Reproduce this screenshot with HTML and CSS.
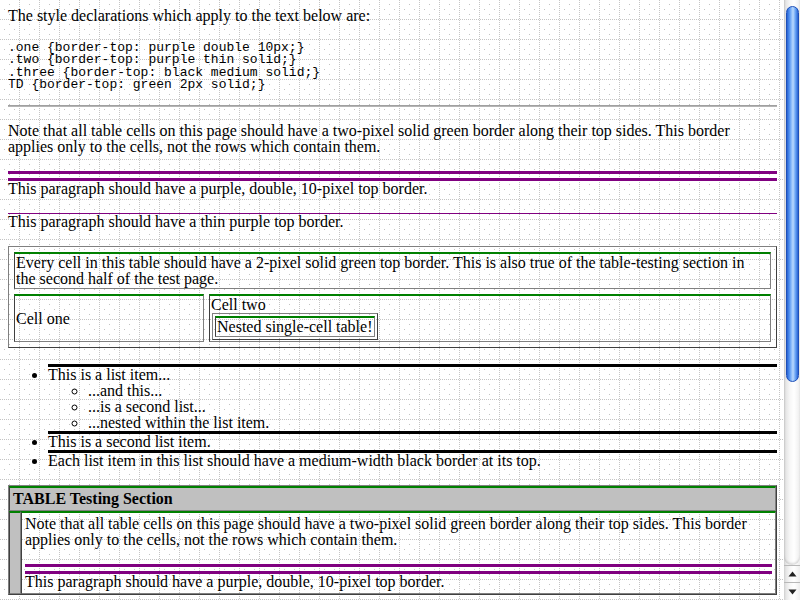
FILE: index.html
```html
<!DOCTYPE html>
<html>
<head>
<meta charset="utf-8">
<title>border-top</title>
<link rel="stylesheet" href="styles.css">
</head>
<body>
<div class="window">
  <main class="page">
    <p class="intro">The style declarations which apply to the text below are:</p>
<pre class="code">.one {border-top: purple double 10px;}
.two {border-top: purple thin solid;}
.three {border-top: black medium solid;}
TD {border-top: green 2px solid;}</pre>
    <hr class="rule">
    <p>Note that all table cells on this page should have a two-pixel solid green border along their top sides. This border applies only to the cells, not the rows which contain them.</p>
    <p class="one">This paragraph should have a purple, double, 10-pixel top border.</p>
    <p class="two">This paragraph should have a thin purple top border.</p>
    <table class="bt">
      <tr>
        <td colspan="2">Every cell in this table should have a 2-pixel solid green top border. This is also true of the table-testing section in<br>the second half of the test page.</td>
      </tr>
      <tr>
        <td class="c1">Cell one</td>
        <td class="c2">Cell two
          <table class="nest"><tr><td>Nested single-cell table!</td></tr></table>
        </td>
      </tr>
    </table>
    <ul class="list">
      <li class="three">This is a list item...
        <ul class="sub">
          <li>...and this...</li>
          <li>...is a second list...</li>
          <li>...nested within the list item.</li>
        </ul>
      </li>
      <li class="three">This is a second list item.</li>
      <li class="three">Each list item in this list should have a medium-width black border at its top.</li>
    </ul>
    <table class="tabletest">
      <tr>
        <td colspan="2" class="head"><strong>TABLE Testing Section</strong></td>
      </tr>
      <tr>
        <td class="side">&nbsp;</td>
        <td class="content">
          <p class="first">Note that all table cells on this page should have a two-pixel solid green border along their top sides. This border applies only to the cells, not the rows which contain them.</p>
          <p class="one last">This paragraph should have a purple, double, 10-pixel top border.</p>
        </td>
      </tr>
    </table>
  </main>
  <div class="scrollbar">
    <div class="sb-track">
      <div class="sb-thumb"></div>
    </div>
    <div class="sb-btn sb-up">
      <svg width="9" height="6" viewBox="0 0 9 6"><path d="M4.5 0.5L8.5 5.5H0.5Z" fill="#222"/></svg>
    </div>
    <div class="sb-btn sb-down">
      <svg width="9" height="6" viewBox="0 0 9 6"><path d="M0.5 0.5H8.5L4.5 5.5Z" fill="#222"/></svg>
    </div>
  </div>
</div>
</body>
</html>
```

FILE: styles.css
```css
html, body {
  margin: 0;
  padding: 0;
  height: 600px;
  overflow: hidden;
}

body {
  font-family: "Liberation Serif", "Times New Roman", serif;
  font-size: 16px;
  line-height: 16px;
  color: #000;
  background: #fff;
}

.window {
  display: flex;
  width: 800px;
  height: 600px;
}

.page {
  flex: none;
  width: 784px;
  height: 600px;
  box-sizing: border-box;
  padding: 8px 7px 8px 8px;
  overflow: hidden;
  background-color: #fff;
  background-image: url("data:image/svg+xml,%3Csvg xmlns='http://www.w3.org/2000/svg' width='20' height='20' shape-rendering='crispEdges'%3E%3Cg fill='%23c4c4c4'%3E%3Crect x='9' y='4' width='1' height='1'/%3E%3Crect x='4' y='9' width='1' height='1'/%3E%3Crect x='14' y='9' width='1' height='1'/%3E%3Crect x='9' y='14' width='1' height='1'/%3E%3C/g%3E%3Cpath d='M0 19.5H20M19.5 0V20' stroke='%23c4c4c4' stroke-width='1' stroke-dasharray='1 1'/%3E%3C/svg%3E");
  background-repeat: repeat;
}

p {
  margin: 16px 0;
}

.intro {
  margin-top: 0;
}

.code {
  font-family: "Liberation Mono", "Courier New", monospace;
  font-size: 13px;
  line-height: 12.33px;
  margin: 18px 0 14px;
}

.rule {
  margin: 14px 0 16px;
  height: 0;
  border: 0;
  border-top: 1px solid #a0a0a0;
  border-bottom: 1px solid #b4b4b4;
}

.one {
  border-top: 10px double #800080;
}

.two {
  border-top: 1px solid #800080;
}

/* first test table */
.bt {
  width: 100%;
  border-collapse: separate;
  border-spacing: 5px;
  border: 1px solid;
  border-color: #808080 #404040 #404040 #808080;
  margin: 16px 0;
}

.bt td,
.nest td {
  box-sizing: border-box;
  padding: 1px;
  border: 1px solid;
  border-color: #008000 #808080 #808080 #404040;
  border-top: 2px solid #008000;
}

.bt .c1 {
  width: 190px;
}

.bt .c2 {
  vertical-align: top;
}

.nest {
  border-collapse: separate;
  border-spacing: 2px;
  border: 1px solid;
  border-color: #808080 #404040 #404040 #808080;
  margin-left: 1px;
}

.nest td {
  white-space: nowrap;
}

/* list */
.list {
  margin: 16px 0;
  padding-left: 40px;
  list-style: disc;
}

.three {
  border-top: 3px solid #000;
}

.sub {
  margin: 0;
  padding-left: 40px;
  list-style: circle;
}

/* table testing section */
.tabletest {
  width: 100%;
  border-collapse: separate;
  border-spacing: 0;
  border: 1px solid;
  border-color: #808080 #404040 #404040 #808080;
  margin: 16px 0;
}

.tabletest td {
  padding: 3px;
  border: 1px solid;
  border-color: #008000 #808080 #808080 #404040;
  border-top: 2px solid #008000;
  vertical-align: top;
}

.tabletest .head,
.tabletest .side {
  background: #c0c0c0;
}

.tabletest .side {
  vertical-align: middle;
}

.tabletest .first {
  margin-top: 0;
}

.tabletest .last {
  margin-bottom: 0;
}

/* scrollbar */
.scrollbar {
  flex: none;
  width: 16px;
  height: 600px;
  display: flex;
  flex-direction: column;
  background: linear-gradient(to right, #cfcfcf 0, #e6e6e6 2px, #f7f7f7 6px, #ffffff 10px, #eeeeee 16px);
}

.sb-track {
  flex: 1;
  padding-top: 6px;
  border-radius: 0 0 8px 8px;
  box-shadow: inset 0 -2px 2px rgba(0, 0, 0, 0.12);
}

.sb-thumb {
  height: 376px;
  margin: 0 1px 0 2px;
  box-sizing: border-box;
  border: 1px solid #1d4fb8;
  border-radius: 7px;
  background: linear-gradient(to right, #2a62d0 0, #4c8ef0 20%, #9cc6fb 45%, #b8d8fd 55%, #5c9af2 80%, #2a62d0 100%);
}

.sb-btn {
  height: 17px;
  display: flex;
  align-items: center;
  justify-content: center;
  border-top: 1px solid #b8b8b8;
}

.sb-up {
  height: 16px;
}
```
